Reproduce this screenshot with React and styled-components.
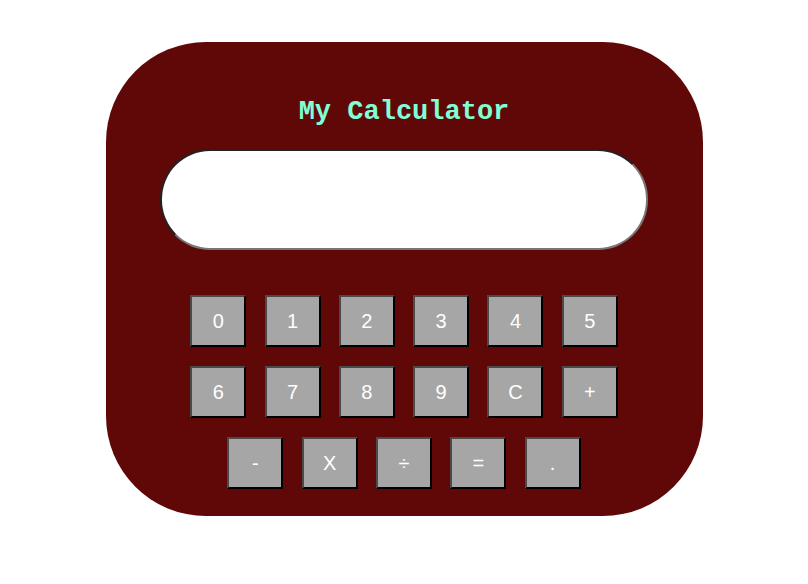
import React from 'react';
import styled, { createGlobalStyle } from 'styled-components';

const GlobalStyle = createGlobalStyle`
    body {
        margin: 0;
        background: white;
        font-family: "Liberation Sans", Arial, sans-serif;
    }
`;

const Page = styled.div`
    display: flex;
    justify-content: center;
    padding-top: 42px;
`;

const Calculator = styled.div`
    box-sizing: border-box;
    width: 597px;
    height: 474px;
    background-color: #600808;
    border-radius: 100px;
    padding: 54px 0 27px;
    display: flex;
    flex-direction: column;
    align-items: center;
`;

const Title = styled.h1`
    margin: 0;
    font-family: "Liberation Mono", "Courier New", monospace;
    font-weight: bold;
    font-size: 27px;
    line-height: 32px;
    color: aquamarine;
`;

const Display = styled.input`
    box-sizing: border-box;
    margin-top: 21px;
    width: 488px;
    height: 101px;
    border-radius: 50px;
    border: 2px solid;
    border-color: #222 #777 #777 #222;
    background: white;
    outline: none;
`;

const Keypad = styled.div`
    margin-top: 45px;
    display: flex;
    flex-direction: column;
    align-items: center;
    gap: 19px;
`;

const Row = styled.div`
    display: flex;
    gap: 18.3px;
`;

const Key = styled.button`
    box-sizing: border-box;
    width: 56px;
    height: 52px;
    padding: 0;
    background-color: #a6a6a6;
    color: white;
    font-family: "Liberation Sans", Arial, sans-serif;
    font-size: 20px;
    border: 2px solid;
    border-color: #4a4a4a #000 #000 #4a4a4a;
    cursor: pointer;
`;

const rows = [
    ['0', '1', '2', '3', '4', '5'],
    ['6', '7', '8', '9', 'C', '+'],
    ['-', 'X', '÷', '=', '.'],
];

const App = () => {
    return (
        <>
            <GlobalStyle />
            <Page>
                <Calculator>
                    <Title>My Calculator</Title>
                    <Display type='text' />
                    <Keypad>
                        {rows.map((row, i) => (
                            <Row key={i}>
                                {row.map((k) => (
                                    <Key key={k}>{k}</Key>
                                ))}
                            </Row>
                        ))}
                    </Keypad>
                </Calculator>
            </Page>
        </>
    );
};

export default App;
